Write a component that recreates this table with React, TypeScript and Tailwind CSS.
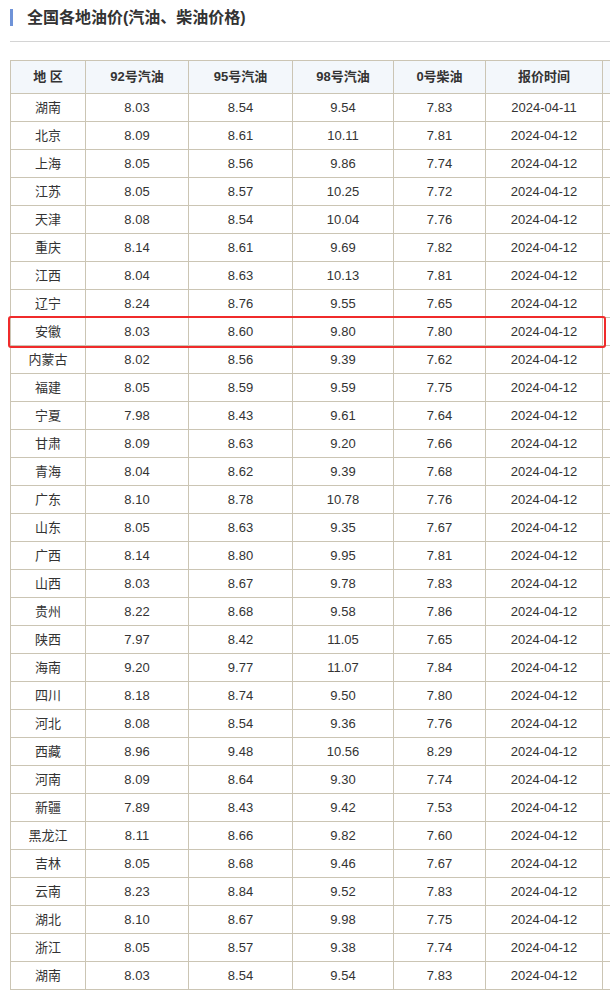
import React from 'react';

const rows: [string, string, string, string, string, string][] = [
  ['湖南', '8.03', '8.54', '9.54', '7.83', '2024-04-11'],
  ['北京', '8.09', '8.61', '10.11', '7.81', '2024-04-12'],
  ['上海', '8.05', '8.56', '9.86', '7.74', '2024-04-12'],
  ['江苏', '8.05', '8.57', '10.25', '7.72', '2024-04-12'],
  ['天津', '8.08', '8.54', '10.04', '7.76', '2024-04-12'],
  ['重庆', '8.14', '8.61', '9.69', '7.82', '2024-04-12'],
  ['江西', '8.04', '8.63', '10.13', '7.81', '2024-04-12'],
  ['辽宁', '8.24', '8.76', '9.55', '7.65', '2024-04-12'],
  ['安徽', '8.03', '8.60', '9.80', '7.80', '2024-04-12'],
  ['内蒙古', '8.02', '8.56', '9.39', '7.62', '2024-04-12'],
  ['福建', '8.05', '8.59', '9.59', '7.75', '2024-04-12'],
  ['宁夏', '7.98', '8.43', '9.61', '7.64', '2024-04-12'],
  ['甘肃', '8.09', '8.63', '9.20', '7.66', '2024-04-12'],
  ['青海', '8.04', '8.62', '9.39', '7.68', '2024-04-12'],
  ['广东', '8.10', '8.78', '10.78', '7.76', '2024-04-12'],
  ['山东', '8.05', '8.63', '9.35', '7.67', '2024-04-12'],
  ['广西', '8.14', '8.80', '9.95', '7.81', '2024-04-12'],
  ['山西', '8.03', '8.67', '9.78', '7.83', '2024-04-12'],
  ['贵州', '8.22', '8.68', '9.58', '7.86', '2024-04-12'],
  ['陕西', '7.97', '8.42', '11.05', '7.65', '2024-04-12'],
  ['海南', '9.20', '9.77', '11.07', '7.84', '2024-04-12'],
  ['四川', '8.18', '8.74', '9.50', '7.80', '2024-04-12'],
  ['河北', '8.08', '8.54', '9.36', '7.76', '2024-04-12'],
  ['西藏', '8.96', '9.48', '10.56', '8.29', '2024-04-12'],
  ['河南', '8.09', '8.64', '9.30', '7.74', '2024-04-12'],
  ['新疆', '7.89', '8.43', '9.42', '7.53', '2024-04-12'],
  ['黑龙江', '8.11', '8.66', '9.82', '7.60', '2024-04-12'],
  ['吉林', '8.05', '8.68', '9.46', '7.67', '2024-04-12'],
  ['云南', '8.23', '8.84', '9.52', '7.83', '2024-04-12'],
  ['湖北', '8.10', '8.67', '9.98', '7.75', '2024-04-12'],
  ['浙江', '8.05', '8.57', '9.38', '7.74', '2024-04-12'],
  ['湖南', '8.03', '8.54', '9.54', '7.83', '2024-04-12'],
];

const heads = ['地 区', '92号汽油', '95号汽油', '98号汽油', '0号柴油', '报价时间', ''];

export default function App() {
  return (
    <div
      className="relative w-[610px] h-[993px] overflow-hidden bg-white text-[#333]"
      style={{ fontFamily: '"Liberation Sans", "Noto Sans CJK SC", sans-serif' }}
    >
      {/* Title */}
      <div className="ml-[10px] pt-[9px] flex items-center">
        <span className="w-[3px] h-[17px] bg-[#6f93d8]"></span>
        <h2 className="ml-[14px] text-[16px] leading-[17px] font-bold">全国各地油价(汽油、柴油价格)</h2>
      </div>
      <div className="ml-[10px] mt-[15px] border-t border-[#d4d4d4]"></div>

      {/* Table */}
      <div className="relative ml-[10px] mt-[18px]">
        <table className="table-fixed border-collapse text-[13px] text-center w-[700px]">
          <colgroup>
            <col className="w-[75px]" />
            <col className="w-[103px]" />
            <col className="w-[104px]" />
            <col className="w-[101px]" />
            <col className="w-[92px]" />
            <col className="w-[117px]" />
            <col className="w-[108px]" />
          </colgroup>
          <thead>
            <tr className="h-[33px] bg-[#f3f7fb]">
              {heads.map((h, i) => (
                <th key={i} className="border border-[#cbc5b4] font-bold p-0">
                  {h}
                </th>
              ))}
            </tr>
          </thead>
          <tbody>
            {rows.map((r, i) => (
              <tr key={i} className="h-[28px]">
                {r.map((c, j) => (
                  <td key={j} className="border border-[#cbc5b4] p-0">
                    {c}
                  </td>
                ))}
                <td className="border border-[#cbc5b4] p-0"></td>
              </tr>
            ))}
          </tbody>
        </table>
        {/* highlight box */}
        <div className="absolute left-[-2px] top-[256px] w-[598px] h-[32px] border-2 border-[#f02b2b] rounded-[3px]"></div>
      </div>
    </div>
  );
}
